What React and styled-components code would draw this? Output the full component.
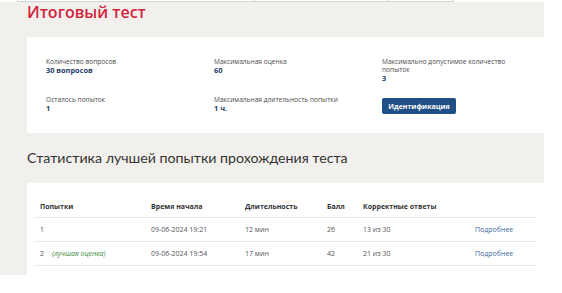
import React from 'react';
import styled, { createGlobalStyle } from 'styled-components';

const GlobalStyle = createGlobalStyle`
  body {
    margin: 0;
    background: #fff;
    font-family: "Open Sans", "Liberation Sans", sans-serif;
  }
`;

const TopStrip = styled.div`
  display: flex;
  height: 2px;
  padding-left: 17px;
`;

const TopCell = styled.div`
  width: ${props => props.w}px;
  border-left: 1px solid #d6d4d0;
  border-bottom: 1px solid #d6d4d0;
  &:last-child {
    border-right: 1px solid #d6d4d0;
  }
`;

const Page = styled.div`
  width: 517px;
  background: #f2f0ec;
  padding: 0 0 0 27px;
`;

const Title = styled.h1`
  margin: 0;
  height: 35px;
  color: #d2223c;
  font-size: 16px;
  font-weight: 600;
  line-height: 20px;
`;

const InfoCard = styled.div`
  background: #fff;
  height: 96px;
  box-sizing: border-box;
  padding: 21px 0 0 19px;
  display: grid;
  grid-template-columns: 168px 168px 130px;
  grid-template-rows: 38px 30px;
`;

const Field = styled.div`
  display: flex;
  flex-direction: column;
  align-items: flex-start;
`;

const Label = styled.span`
  font-size: 6.6px;
  line-height: 8px;
  color: #4a4a4a;
`;

const Value = styled.span`
  font-size: 7.4px;
  line-height: 9px;
  font-weight: 700;
  color: #223e66;
`;

const Button = styled.button`
  margin-top: 2px;
  width: 74px;
  height: 16px;
  padding: 0;
  border: none;
  border-radius: 2px;
  background: #1f4f85;
  color: #fff;
  font-family: inherit;
  font-size: 7px;
  font-weight: 700;
`;

const Heading = styled.h2`
  margin: 0;
  height: 50px;
  padding-top: 14px;
  box-sizing: border-box;
  font-family: Lato, "Open Sans", sans-serif;
  font-size: 14.2px;
  font-weight: 400;
  line-height: 22px;
  color: #333;
`;

const TableCard = styled.div`
  background: #fff;
  padding: 12px 7px 9px 8px;
`;

const Table = styled.table`
  border-collapse: collapse;
  table-layout: fixed;
  width: 502px;
  font-size: 7px;
  color: #555;
`;

const Th = styled.th`
  width: ${props => props.w}px;
  height: 22px;
  padding: 0 0 0 5px;
  text-align: left;
  font-weight: 700;
  color: #333;
  border-bottom: 1px solid #e6e6e6;
`;

const Td = styled.td`
  height: 23px;
  padding: 0 0 0 5px;
  white-space: nowrap;
  border-bottom: 1px solid #e6e6e6;
`;

const Best = styled.i`
  margin-left: 8px;
  color: #3d8a3d;
`;

const Link = styled.a`
  color: #3f6a9b;
  text-decoration: none;
`;

const attempts = [
  { n: 1, best: false, start: '09-06-2024 19:21', dur: '12 мин', score: 26, correct: '13 из 30' },
  { n: 2, best: true, start: '09-06-2024 19:54', dur: '17 мин', score: 42, correct: '21 из 30' },
];

const App = () => (
  <>
    <GlobalStyle />
    <TopStrip>
      <TopCell w={236} />
      <TopCell w={133} />
      <TopCell w={64} />
    </TopStrip>
    <Page>
      <Title>Итоговый тест</Title>
      <InfoCard>
        <Field>
          <Label>Количество вопросов</Label>
          <Value>30 вопросов</Value>
        </Field>
        <Field>
          <Label>Максимальная оценка</Label>
          <Value>60</Value>
        </Field>
        <Field>
          <Label>Максимально допустимое количество попыток</Label>
          <Value>3</Value>
        </Field>
        <Field>
          <Label>Осталось попыток</Label>
          <Value>1</Value>
        </Field>
        <Field>
          <Label>Максимальная длительность попытки</Label>
          <Value>1 ч.</Value>
        </Field>
        <Field>
          <Button>Идентификация</Button>
        </Field>
      </InfoCard>
      <Heading>Статистика лучшей попытки прохождения теста</Heading>
      <TableCard>
        <Table>
          <thead>
            <tr>
              <Th w={106}>Попытки</Th>
              <Th w={89}>Время начала</Th>
              <Th w={77}>Длительность</Th>
              <Th w={31}>Балл</Th>
              <Th w={107}>Корректные ответы</Th>
              <Th w={62} />
            </tr>
          </thead>
          <tbody>
            {attempts.map(a => (
              <tr key={a.n}>
                <Td>
                  {a.n}
                  {a.best && <Best>(лучшая оценка)</Best>}
                </Td>
                <Td>{a.start}</Td>
                <Td>{a.dur}</Td>
                <Td>{a.score}</Td>
                <Td>{a.correct}</Td>
                <Td><Link href="#">Подробнее</Link></Td>
              </tr>
            ))}
          </tbody>
        </Table>
      </TableCard>
    </Page>
  </>
);

export default App;
